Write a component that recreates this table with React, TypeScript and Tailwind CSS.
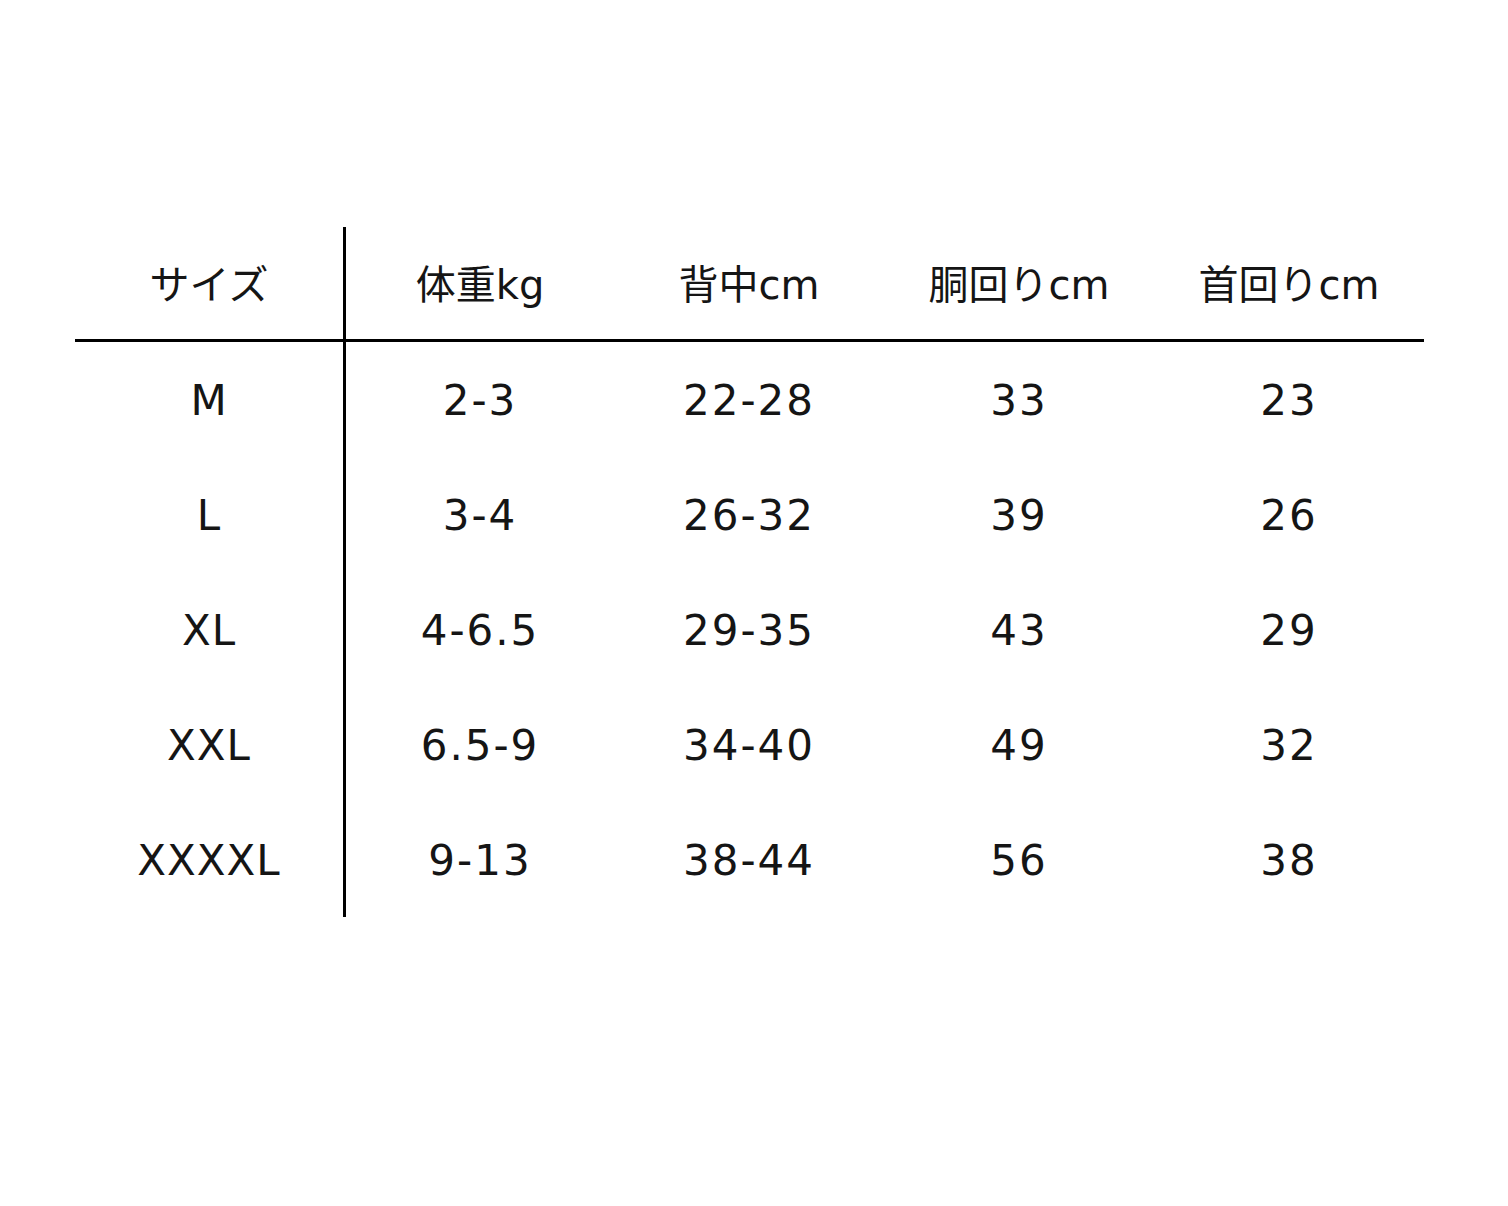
const headers = ["サイズ", "体重kg", "背中cm", "胴回りcm", "首回りcm"];

const rows: string[][] = [
  ["M", "2-3", "22-28", "33", "23"],
  ["L", "3-4", "26-32", "39", "26"],
  ["XL", "4-6.5", "29-35", "43", "29"],
  ["XXL", "6.5-9", "34-40", "49", "32"],
  ["XXXXL", "9-13", "38-44", "56", "38"],
];

export default function App() {
  return (
    <div
      className="w-[1508px] h-[1206px] bg-white text-[#151515] pt-[227px] pl-[75px]"
      style={{ fontFamily: '"DejaVu Sans", "Noto Sans CJK JP", sans-serif' }}
    >
      <div className="grid grid-cols-[271px_268px_270px_270px_270px]">
        {headers.map((h, i) => (
          <div
            key={h}
            className={
              i === 0
                ? "h-[115px] pt-1 flex items-center justify-center border-b-[3px] border-r-[3px] border-black text-[40px]"
                : "h-[115px] pt-1 flex items-center justify-center border-b-[3px] border-black text-[40px]"
            }
          >
            {h}
          </div>
        ))}
        {rows.map((r) =>
          r.map((cell, i) => (
            <div
              key={r[0] + i}
              className={
                i === 0
                  ? "h-[115px] pt-0.5 flex items-center justify-center border-r-[3px] border-black text-[42px] tracking-[1px]"
                  : "h-[115px] pt-0.5 flex items-center justify-center text-[42px] tracking-[2px]"
              }
            >
              {cell}
            </div>
          ))
        )}
      </div>
    </div>
  );
}
